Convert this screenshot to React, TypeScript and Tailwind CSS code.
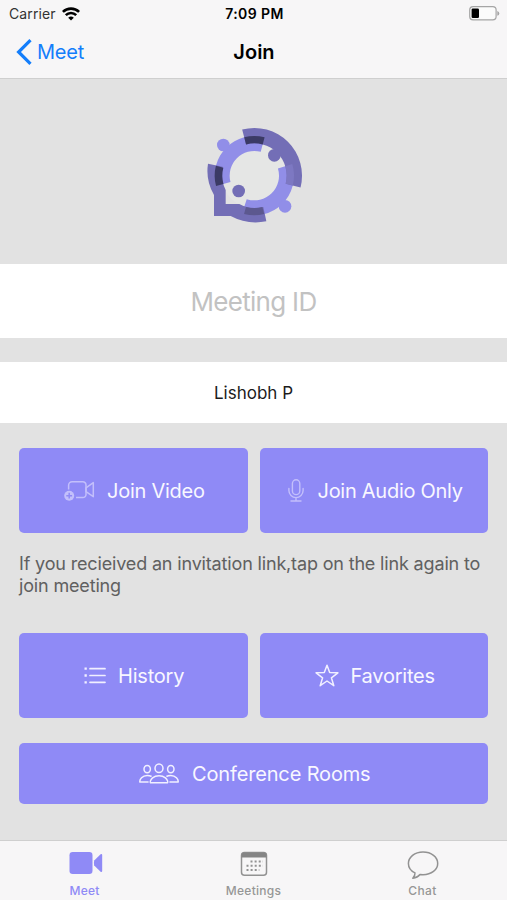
import React from 'react';

const CX = 178;
const CY = 182;

const point = (r: number, deg: number) => {
  const a = (deg * Math.PI) / 180;
  return `${(CX + r * Math.cos(a)).toFixed(1)} ${(CY + r * Math.sin(a)).toFixed(1)}`;
};

// ring segment between two radii, angles run clockwise from east
const segment = (inner: number, outer: number, from: number, to: number) =>
  `M${point(outer, from)}A${outer} ${outer} 0 0 1 ${point(outer, to)}L${point(inner, to)}A${inner} ${inner} 0 0 0 ${point(inner, from)}Z`;

const Logo = () => (
  <svg className="w-[120px] h-[120px] ml-[3px]" viewBox="0 0 360 360">
    <circle cx="178" cy="182" r="98" fill="#e5e6e5" />
    <path d={segment(74, 119, 165, 285)} fill="#918ee8" />
    <path d={segment(74, 119, -17, 108)} fill="#918ee8" />
    <path d={segment(97, 143, -104.8, 14.3)} fill="#736eb6" />
    <path
      d="M39 146A143 143 0 0 0 57 240V303H107Q157 330 214 319L205 276Q166 286 133 267H92V225Q75 190 83 155Z"
      fill="#736eb6"
    />
    <path d={segment(97, 119, -104.8, -75)} fill="#3b3a65" />
    <path d={segment(96, 119, 165, 194.4)} fill="#3b3a65" />
    <path d={segment(97, 119, 75.6, 105)} fill="#5c588f" />
    <path d={segment(97, 119, -17, 14.3)} fill="#7d78c2" />
    <circle cx="85" cy="90" r="19" fill="#918ee8" />
    <circle cx="270" cy="274" r="19" fill="#918ee8" />
    <circle cx="238" cy="121" r="19" fill="#736eb6" />
    <circle cx="131" cy="228" r="19" fill="#736eb6" />
  </svg>
);

const WifiIcon = () => (
  <svg className="w-[18px] h-[14px]" viewBox="0 0 18 14" fill="none" stroke="#000" strokeWidth="2.6">
    <path d="M.9 4.9a11.6 11.6 0 0 1 16.2 0M3.8 8.2a7.4 7.4 0 0 1 10.4 0" />
    <path d="M9 13.5 6.2 10.8a4 4 0 0 1 5.6 0Z" fill="#000" stroke="none" />
  </svg>
);

const BatteryIcon = () => (
  <svg className="w-[31px] h-[15px]" viewBox="0 0 31 15">
    <rect x=".7" y=".7" width="26.4" height="13.2" rx="3.4" fill="#fbfbfb" stroke="#a5a5a5" strokeWidth="1.2" />
    <rect x="2.6" y="2.6" width="7.4" height="9.4" rx="1.2" fill="#000" />
    <path d="M28.3 5v4.8q2-.8 2-2.4t-2-2.4Z" fill="#a5a5a5" />
  </svg>
);

const AddVideoIcon = () => (
  <svg className="w-[31px] h-[22px]" viewBox="0 0 31 22" fill="none" stroke="#c3bffb" strokeWidth="1.5" strokeLinejoin="round">
    <path d="M4.6 9.5V5.2a3.5 3.5 0 0 1 3.5-3.5h10.6A3.2 3.2 0 0 1 22 4.9v9.5a3.2 3.2 0 0 1-3.3 3.2H12" />
    <path d="m22 7.8 7.3-5.2v14.1L22 11.6Z" />
    <circle cx="5.2" cy="15.7" r="5" fill="#c3bffb" stroke="none" />
    <path d="M5.2 12.8v5.8M2.3 15.7h5.8" stroke="#8f8af6" />
  </svg>
);

const MicIcon = () => (
  <svg className="w-[16px] h-[23px]" viewBox="0 0 16 23" fill="none" stroke="#c3bffb" strokeWidth="1.4" strokeLinecap="round">
    <rect x="4.4" y=".8" width="7.4" height="14.8" rx="3.7" />
    <path d="M.9 9.4v2.1a7.1 7.1 0 0 0 14.2 0V9.4M8 18.6v3.3M3 22h10" />
  </svg>
);

const ListIcon = () => (
  <svg className="w-[22px] h-[18px]" viewBox="0 0 22 18" fill="none" stroke="#f1f0ff" strokeWidth="1.7">
    <path d="M6 1.7h15M6 8.5h15M6 15.3h15" strokeLinecap="round" />
    <path d="M.5 1.7h2.3M.5 8.5h2.3M.5 15.3h2.3" strokeWidth="2.3" />
  </svg>
);

const StarIcon = () => (
  <svg className="w-[24px] h-[23px]" viewBox="0 0 24 23" fill="none" stroke="#f1f0ff" strokeWidth="1.5" strokeLinejoin="round">
    <path d="m12 1.2 2.7 7.4 8.2.2-6.5 5 2.4 7.9L12 17l-6.8 4.7 2.4-7.9-6.5-5 8.2-.2Z" />
  </svg>
);

const GroupIcon = () => (
  <svg className="w-[40px] h-[21px]" viewBox="0 0 40 21" fill="none" stroke="#f1f0ff" strokeWidth="1.5" strokeLinejoin="round">
    <ellipse cx="20" cy="5.3" rx="4" ry="4.3" />
    <ellipse cx="8.2" cy="6.1" rx="3.2" ry="3.7" />
    <ellipse cx="31.8" cy="6.1" rx="3.2" ry="3.7" />
    <path d="M11.5 19.7c-.7-.7 0-3.1 2.1-4.8 3.4-2.8 9.4-2.8 12.8 0 2.1 1.7 2.8 4.1 2.1 4.8Z" />
    <path d="M9.6 19.1H.9c-.6-2.6 2.5-6.6 7.3-6.6 1.9 0 3.2.3 4.4 1M30.4 19.1h8.7c.6-2.6-2.5-6.6-7.3-6.6-1.9 0-3.2.3-4.4 1" />
  </svg>
);

interface ActionButtonProps {
  icon: React.ReactNode;
  label: string;
  className: string;
  labelClassName: string;
}

const ActionButton: React.FC<ActionButtonProps> = ({ icon, label, className, labelClassName }) => (
  <button className={`flex items-center rounded-[5px] bg-[#8f8af6] text-[20px] leading-6 text-[#f8f7ff] whitespace-nowrap ${className}`}>
    {icon}
    <span className={labelClassName}>{label}</span>
  </button>
);

const TabBar = () => (
  <nav className="h-[60px] shrink-0 grid grid-cols-3 border-t border-[#cfcfcf] bg-[#f7f6f7] text-[12px] leading-4 font-medium text-[#969696]">
    <button className="flex flex-col items-center pt-[10px] text-[#8f8af6]">
      <svg className="w-[34px] h-[24px] ml-[2px]" viewBox="0 0 34 24" fill="#8f8af6">
        <rect x=".5" y="1" width="23" height="22" rx="3.2" />
        <path d="M25.2 9.4 31.6 3.3c.8-.6 1.600-.3 1.600.8v15.800c0 1.100-.8 1.400-1.600.8l-6.400-6.100Q24.600 12 25.200 9.400Z" />
      </svg>
      <span className="mt-[8px] tracking-[0.2px]">Meet</span>
    </button>
    <button className="flex flex-col items-center pt-[10px]">
      <svg className="w-[28px] h-[26px]" viewBox="0 0 28 26" fill="none">
        <rect x="1.5" y="1.5" width="25" height="22.8" rx="3" stroke="#929292" strokeWidth="1.5" />
        <path d="M1.5 6.5V4A2.5 2.5 0 0 1 4 1.5h20A2.5 2.5 0 0 1 26.5 4v2.5Z" fill="#858585" />
        <path d="M10.5 10.5H23M6.5 14.7H23M6.5 18.9h12.8" stroke="#929292" strokeWidth="2" strokeDasharray="2 2.1" />
      </svg>
      <span className="mt-[6px] tracking-[0.25px]">Meetings</span>
    </button>
    <button className="flex flex-col items-center pt-[10px]">
      <svg className="w-[32px] h-[28px]" viewBox="0 0 32 28" fill="none" stroke="#929292" strokeWidth="1.5" strokeLinejoin="round">
        <path d="M16 1C7.6 1 1.4 6.2 1.4 12.5c0 4.1 2.6 7.5 6.6 9.4.2 2.2-.8 3.8-2.2 5.3 3.3-.4 5.5-1.5 7.2-3.7l3 .2c8.4 0 14.7-5 14.7-11.3C30.700 6 24.400 1 16 1Z" />
      </svg>
      <span className="mt-[4px] tracking-[0.4px]">Chat</span>
    </button>
  </nav>
);

const App: React.FC = () => {
  return (
    <div className="w-[507px] h-[900px] flex flex-col overflow-hidden bg-[#e2e2e2] font-['Inter','Liberation_Sans',sans-serif]">
      <header className="h-[79px] shrink-0 bg-[#f7f6f7] border-b border-[#cfcfcf]">
        <div className="h-[27px] grid grid-cols-3 items-center pl-[9px] pr-[7px] text-[14px] leading-4">
          <div className="flex items-center gap-[6px] text-[#333]">
            <span className="tracking-[0.1px]">Carrier</span>
            <WifiIcon />
          </div>
          <span className="text-center font-semibold tracking-[0.4px] text-black">7:09 PM</span>
          <div className="flex justify-end">
            <BatteryIcon />
          </div>
        </div>
        <div className="h-[50px] grid grid-cols-3 items-center px-4 text-[20px] leading-6">
          <button className="flex items-center gap-[5px] text-[#147efb]">
            <svg className="w-[16px] h-[26px]" viewBox="0 0 16 26" fill="none" stroke="#147efb" strokeWidth="3.2">
              <path d="M14.5 1.2 2.6 13l11.9 11.8" />
            </svg>
            <span className="tracking-[-0.2px]">Meet</span>
          </button>
          <h1 className="pl-px text-center font-semibold text-black">Join</h1>
        </div>
      </header>

      <main className="flex-1 flex flex-col">
        <div className="h-[185px] flex justify-center pt-[36px]">
          <Logo />
        </div>
        <input
          className="h-[74px] bg-white text-center text-[26px] tracking-[-0.7px] placeholder:text-[#c2c2c2] placeholder:opacity-100 outline-none"
          placeholder="Meeting ID"
        />
        <div className="h-[61px] mt-6 pt-[2px] flex items-center justify-center bg-white text-[17px] text-[#1c1c1c]">Lishobh P</div>

        <div className="px-[19px] pt-[25px]">
          <div className="grid grid-cols-2 gap-x-[12px]">
            <ActionButton icon={<AddVideoIcon />} label="Join Video" className="h-[85px] pl-[45px] tracking-[-0.25px]" labelClassName="ml-[12px]" />
            <ActionButton icon={<MicIcon />} label="Join Audio Only" className="h-[85px] pl-[28px] tracking-[-0.27px]" labelClassName="ml-[14px]" />
          </div>
          <p className="h-[100px] pt-[20px] text-[18px] leading-[21.5px] tracking-[-0.16px] text-[#606060] whitespace-nowrap">
            If you recieived an invitation link,tap on the link again to
            <br />
            join meeting
          </p>
          <div className="grid grid-cols-2 gap-x-[12px]">
            <ActionButton icon={<ListIcon />} label="History" className="h-[85px] pl-[65px] tracking-[-0.2px]" labelClassName="ml-[12px]" />
            <ActionButton icon={<StarIcon />} label="Favorites" className="h-[85px] pl-[55px] tracking-[-0.22px]" labelClassName="ml-[12px]" />
          </div>
          <ActionButton icon={<GroupIcon />} label="Conference Rooms" className="w-full h-[61px] mt-[25px] pl-[120px] tracking-[-0.15px]" labelClassName="ml-[13px]" />
        </div>
      </main>

      <TabBar />
    </div>
  );
};

export default App;
